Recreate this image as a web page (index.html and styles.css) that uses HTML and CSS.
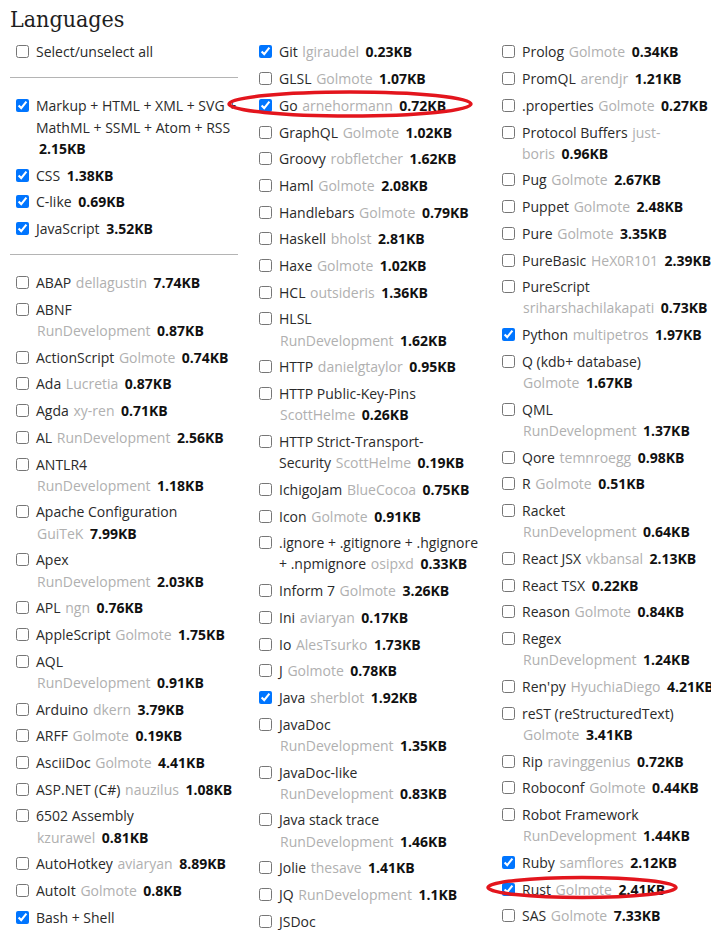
FILE: index.html
```html
<!DOCTYPE html>
<html>
<head>
<meta charset="utf-8">
<link rel="stylesheet" href="styles.css">
</head>
<body>
<div class="page">
  <h1 class="title">Languages</h1>
  <div class="cols">
    <div class="col">
      <label class="opt"><input type="checkbox"><span class="txt"><span class="name">Select/unselect all</span></span></label>
      <hr class="sep">
      <label class="opt"><input type="checkbox" checked><span class="txt"><span class="name">Markup + HTML + XML + SVG + MathML + SSML + Atom + RSS</span> <span class="size">2.15KB</span></span></label>
      <label class="opt"><input type="checkbox" checked><span class="txt"><span class="name">CSS</span> <span class="size">1.38KB</span></span></label>
      <label class="opt"><input type="checkbox" checked><span class="txt"><span class="name">C-like</span> <span class="size">0.69KB</span></span></label>
      <label class="opt"><input type="checkbox" checked><span class="txt"><span class="name">JavaScript</span> <span class="size">3.52KB</span></span></label>
      <hr class="sep">
      <label class="opt"><input type="checkbox"><span class="txt"><span class="name">ABAP</span> <span class="owner">dellagustin</span><span class="size">7.74KB</span></span></label>
      <label class="opt"><input type="checkbox"><span class="txt"><span class="name">ABNF</span> <span class="owner">RunDevelopment</span><span class="size">0.87KB</span></span></label>
      <label class="opt"><input type="checkbox"><span class="txt"><span class="name">ActionScript</span> <span class="owner">Golmote</span><span class="size">0.74KB</span></span></label>
      <label class="opt"><input type="checkbox"><span class="txt"><span class="name">Ada</span> <span class="owner">Lucretia</span><span class="size">0.87KB</span></span></label>
      <label class="opt"><input type="checkbox"><span class="txt"><span class="name">Agda</span> <span class="owner">xy-ren</span><span class="size">0.71KB</span></span></label>
      <label class="opt"><input type="checkbox"><span class="txt"><span class="name">AL</span> <span class="owner">RunDevelopment</span><span class="size">2.56KB</span></span></label>
      <label class="opt"><input type="checkbox"><span class="txt"><span class="name">ANTLR4</span> <span class="owner">RunDevelopment</span><span class="size">1.18KB</span></span></label>
      <label class="opt"><input type="checkbox"><span class="txt"><span class="name">Apache Configuration</span> <span class="owner">GuiTeK</span><span class="size">7.99KB</span></span></label>
      <label class="opt"><input type="checkbox"><span class="txt"><span class="name">Apex</span> <span class="owner">RunDevelopment</span><span class="size">2.03KB</span></span></label>
      <label class="opt"><input type="checkbox"><span class="txt"><span class="name">APL</span> <span class="owner">ngn</span><span class="size">0.76KB</span></span></label>
      <label class="opt"><input type="checkbox"><span class="txt"><span class="name">AppleScript</span> <span class="owner">Golmote</span><span class="size">1.75KB</span></span></label>
      <label class="opt"><input type="checkbox"><span class="txt"><span class="name">AQL</span><br><span class="owner">RunDevelopment</span><span class="size">0.91KB</span></span></label>
      <label class="opt"><input type="checkbox"><span class="txt"><span class="name">Arduino</span> <span class="owner">dkern</span><span class="size">3.79KB</span></span></label>
      <label class="opt"><input type="checkbox"><span class="txt"><span class="name">ARFF</span> <span class="owner">Golmote</span><span class="size">0.19KB</span></span></label>
      <label class="opt"><input type="checkbox"><span class="txt"><span class="name">AsciiDoc</span> <span class="owner">Golmote</span><span class="size">4.41KB</span></span></label>
      <label class="opt"><input type="checkbox"><span class="txt"><span class="name">ASP.NET (C#)</span> <span class="owner">nauzilus</span><span class="size">1.08KB</span></span></label>
      <label class="opt"><input type="checkbox"><span class="txt"><span class="name">6502 Assembly</span> <span class="owner">kzurawel</span><span class="size">0.81KB</span></span></label>
      <label class="opt"><input type="checkbox"><span class="txt"><span class="name">AutoHotkey</span> <span class="owner">aviaryan</span><span class="size">8.89KB</span></span></label>
      <label class="opt"><input type="checkbox"><span class="txt"><span class="name">AutoIt</span> <span class="owner">Golmote</span><span class="size">0.8KB</span></span></label>
      <label class="opt"><input type="checkbox" checked><span class="txt"><span class="name">Bash + Shell</span></span></label>
    </div>
    <div class="col">
      <label class="opt"><input type="checkbox" checked><span class="txt"><span class="name">Git</span> <span class="owner">lgiraudel</span><span class="size">0.23KB</span></span></label>
      <label class="opt"><input type="checkbox"><span class="txt"><span class="name">GLSL</span> <span class="owner">Golmote</span><span class="size">1.07KB</span></span></label>
      <label class="opt"><input type="checkbox" checked><span class="txt"><span class="name">Go</span> <span class="owner">arnehormann</span><span class="size">0.72KB</span></span></label>
      <label class="opt"><input type="checkbox"><span class="txt"><span class="name">GraphQL</span> <span class="owner">Golmote</span><span class="size">1.02KB</span></span></label>
      <label class="opt"><input type="checkbox"><span class="txt"><span class="name">Groovy</span> <span class="owner">robfletcher</span><span class="size">1.62KB</span></span></label>
      <label class="opt"><input type="checkbox"><span class="txt"><span class="name">Haml</span> <span class="owner">Golmote</span><span class="size">2.08KB</span></span></label>
      <label class="opt"><input type="checkbox"><span class="txt"><span class="name">Handlebars</span> <span class="owner">Golmote</span><span class="size">0.79KB</span></span></label>
      <label class="opt"><input type="checkbox"><span class="txt"><span class="name">Haskell</span> <span class="owner">bholst</span><span class="size">2.81KB</span></span></label>
      <label class="opt"><input type="checkbox"><span class="txt"><span class="name">Haxe</span> <span class="owner">Golmote</span><span class="size">1.02KB</span></span></label>
      <label class="opt"><input type="checkbox"><span class="txt"><span class="name">HCL</span> <span class="owner">outsideris</span><span class="size">1.36KB</span></span></label>
      <label class="opt"><input type="checkbox"><span class="txt"><span class="name">HLSL</span> <span class="owner">RunDevelopment</span><span class="size">1.62KB</span></span></label>
      <label class="opt"><input type="checkbox"><span class="txt"><span class="name">HTTP</span> <span class="owner">danielgtaylor</span><span class="size">0.95KB</span></span></label>
      <label class="opt"><input type="checkbox"><span class="txt"><span class="name">HTTP Public-Key-Pins</span> <span class="owner">ScottHelme</span><span class="size">0.26KB</span></span></label>
      <label class="opt"><input type="checkbox"><span class="txt"><span class="name">HTTP Strict-Transport-<br>Security</span> <span class="owner">ScottHelme</span><span class="size">0.19KB</span></span></label>
      <label class="opt"><input type="checkbox"><span class="txt"><span class="name">IchigoJam</span> <span class="owner">BlueCocoa</span><span class="size">0.75KB</span></span></label>
      <label class="opt"><input type="checkbox"><span class="txt"><span class="name">Icon</span> <span class="owner">Golmote</span><span class="size">0.91KB</span></span></label>
      <label class="opt"><input type="checkbox"><span class="txt"><span class="name">.ignore + .gitignore + .hgignore + .npmignore</span> <span class="owner">osipxd</span><span class="size">0.33KB</span></span></label>
      <label class="opt"><input type="checkbox"><span class="txt"><span class="name">Inform 7</span> <span class="owner">Golmote</span><span class="size">3.26KB</span></span></label>
      <label class="opt"><input type="checkbox"><span class="txt"><span class="name">Ini</span> <span class="owner">aviaryan</span><span class="size">0.17KB</span></span></label>
      <label class="opt"><input type="checkbox"><span class="txt"><span class="name">Io</span> <span class="owner">AlesTsurko</span><span class="size">1.73KB</span></span></label>
      <label class="opt"><input type="checkbox"><span class="txt"><span class="name">J</span> <span class="owner">Golmote</span><span class="size">0.78KB</span></span></label>
      <label class="opt"><input type="checkbox" checked><span class="txt"><span class="name">Java</span> <span class="owner">sherblot</span><span class="size">1.92KB</span></span></label>
      <label class="opt"><input type="checkbox"><span class="txt"><span class="name">JavaDoc</span> <span class="owner">RunDevelopment</span><span class="size">1.35KB</span></span></label>
      <label class="opt"><input type="checkbox"><span class="txt"><span class="name">JavaDoc-like</span> <span class="owner">RunDevelopment</span><span class="size">0.83KB</span></span></label>
      <label class="opt"><input type="checkbox"><span class="txt"><span class="name">Java stack trace</span> <span class="owner">RunDevelopment</span><span class="size">1.46KB</span></span></label>
      <label class="opt"><input type="checkbox"><span class="txt"><span class="name">Jolie</span> <span class="owner">thesave</span><span class="size">1.41KB</span></span></label>
      <label class="opt"><input type="checkbox"><span class="txt"><span class="name">JQ</span> <span class="owner">RunDevelopment</span><span class="size">1.1KB</span></span></label>
      <label class="opt"><input type="checkbox"><span class="txt"><span class="name">JSDoc</span></span></label>
    </div>
    <div class="col">
      <label class="opt"><input type="checkbox"><span class="txt"><span class="name">Prolog</span> <span class="owner">Golmote</span><span class="size">0.34KB</span></span></label>
      <label class="opt"><input type="checkbox"><span class="txt"><span class="name">PromQL</span> <span class="owner">arendjr</span><span class="size">1.21KB</span></span></label>
      <label class="opt"><input type="checkbox"><span class="txt"><span class="name">.properties</span> <span class="owner">Golmote</span><span class="size">0.27KB</span></span></label>
      <label class="opt"><input type="checkbox"><span class="txt"><span class="name">Protocol Buffers</span> <span class="owner">just-boris</span><span class="size">0.96KB</span></span></label>
      <label class="opt"><input type="checkbox"><span class="txt"><span class="name">Pug</span> <span class="owner">Golmote</span><span class="size">2.67KB</span></span></label>
      <label class="opt"><input type="checkbox"><span class="txt"><span class="name">Puppet</span> <span class="owner">Golmote</span><span class="size">2.48KB</span></span></label>
      <label class="opt"><input type="checkbox"><span class="txt"><span class="name">Pure</span> <span class="owner">Golmote</span><span class="size">3.35KB</span></span></label>
      <label class="opt"><input type="checkbox"><span class="txt"><span class="name">PureBasic</span> <span class="owner">HeX0R101</span><span class="size">2.39KB</span></span></label>
      <label class="opt"><input type="checkbox"><span class="txt"><span class="name">PureScript</span> <span class="owner">sriharshachilakapati</span><span class="size">0.73KB</span></span></label>
      <label class="opt"><input type="checkbox" checked><span class="txt"><span class="name">Python</span> <span class="owner">multipetros</span><span class="size">1.97KB</span></span></label>
      <label class="opt"><input type="checkbox"><span class="txt"><span class="name">Q (kdb+ database)</span> <span class="owner">Golmote</span><span class="size">1.67KB</span></span></label>
      <label class="opt"><input type="checkbox"><span class="txt"><span class="name">QML</span> <span class="owner">RunDevelopment</span><span class="size">1.37KB</span></span></label>
      <label class="opt"><input type="checkbox"><span class="txt"><span class="name">Qore</span> <span class="owner">temnroegg</span><span class="size">0.98KB</span></span></label>
      <label class="opt"><input type="checkbox"><span class="txt"><span class="name">R</span> <span class="owner">Golmote</span><span class="size">0.51KB</span></span></label>
      <label class="opt"><input type="checkbox"><span class="txt"><span class="name">Racket</span> <span class="owner">RunDevelopment</span><span class="size">0.64KB</span></span></label>
      <label class="opt"><input type="checkbox"><span class="txt"><span class="name">React JSX</span> <span class="owner">vkbansal</span><span class="size">2.13KB</span></span></label>
      <label class="opt"><input type="checkbox"><span class="txt"><span class="name">React TSX</span> <span class="size">0.22KB</span></span></label>
      <label class="opt"><input type="checkbox"><span class="txt"><span class="name">Reason</span> <span class="owner">Golmote</span><span class="size">0.84KB</span></span></label>
      <label class="opt"><input type="checkbox"><span class="txt"><span class="name">Regex</span> <span class="owner">RunDevelopment</span><span class="size">1.24KB</span></span></label>
      <label class="opt"><input type="checkbox"><span class="txt"><span class="name">Ren'py</span> <span class="owner">HyuchiaDiego</span><span class="size">4.21KB</span></span></label>
      <label class="opt"><input type="checkbox"><span class="txt"><span class="name">reST (reStructuredText)</span> <span class="owner">Golmote</span><span class="size">3.41KB</span></span></label>
      <label class="opt"><input type="checkbox"><span class="txt"><span class="name">Rip</span> <span class="owner">ravinggenius</span><span class="size">0.72KB</span></span></label>
      <label class="opt"><input type="checkbox"><span class="txt"><span class="name">Roboconf</span> <span class="owner">Golmote</span><span class="size">0.44KB</span></span></label>
      <label class="opt"><input type="checkbox"><span class="txt"><span class="name">Robot Framework</span> <span class="owner">RunDevelopment</span><span class="size">1.44KB</span></span></label>
      <label class="opt"><input type="checkbox" checked><span class="txt"><span class="name">Ruby</span> <span class="owner">samflores</span><span class="size">2.12KB</span></span></label>
      <label class="opt"><input type="checkbox" checked><span class="txt"><span class="name">Rust</span> <span class="owner">Golmote</span><span class="size">2.41KB</span></span></label>
      <label class="opt"><input type="checkbox"><span class="txt"><span class="name">SAS</span> <span class="owner">Golmote</span><span class="size">7.33KB</span></span></label>
    </div>
  </div>
  <svg class="marks" width="711" height="930" viewBox="0 0 711 930" aria-hidden="true">
    <ellipse cx="350" cy="104" rx="121" ry="12" fill="none" stroke="#e3151d" stroke-width="3.5"/>
    <ellipse cx="582" cy="887.5" rx="94" ry="10" fill="none" stroke="#e3151d" stroke-width="3.5"/>
  </svg>
</div>
</body>
</html>
```
FILE: styles.css
```css
html, body {
  margin: 0;
  padding: 0;
  overflow: hidden;
  background: #fff;
}

.page {
  position: relative;
  padding-left: 10px;
  width: 740px;
  height: 930px;
  font-family: "Open Sans", "Liberation Sans", sans-serif;
  font-size: 14px;
  color: #2a2a2a;
}

.title {
  margin: 0 0 6.4px;
  padding-top: 3px;
  font-family: "DejaVu Serif Condensed", "DejaVu Serif", serif;
  font-stretch: condensed;
  font-weight: normal;
  font-size: 23px;
  line-height: 32px;
  color: #1e1e1e;
}

.cols {
  display: grid;
  grid-template-columns: repeat(3, 228px);
  column-gap: 15px;
  align-items: start;
}

.col {
  display: flex;
  flex-direction: column;
}

.opt {
  display: flex;
  align-items: flex-start;
  line-height: 21.2px;
  margin-bottom: 5.5px;
}

.opt input {
  flex: none;
  width: 13px;
  height: 13px;
  margin: 4px 7px 0 6px;
}

.txt {
  flex: 1;
  min-width: 0;
}

.owner {
  color: #b0b0b0;
  margin-left: 1px;
  margin-right: 6.5px;
}

.size {
  font-weight: 700;
  color: #111;
}

.name + .size {
  margin-left: 3px;
}

.sep {
  border: 0;
  border-top: 1px solid #b4b4b4;
  margin: 9px 0 17.4px;
  height: 0;
}

.marks {
  position: absolute;
  left: 0;
  top: 0;
  pointer-events: none;
}
```
